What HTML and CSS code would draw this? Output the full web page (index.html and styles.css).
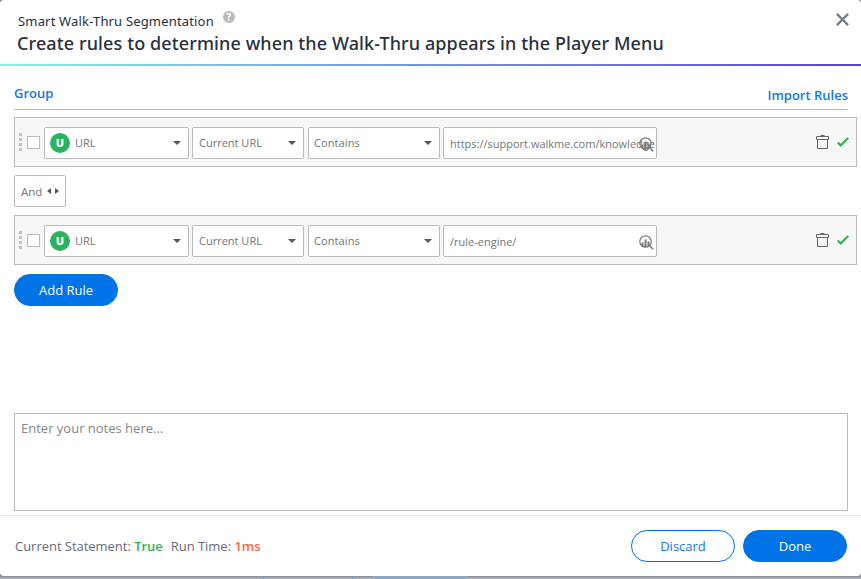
FILE: index.html
```html
<!DOCTYPE html>
<html lang="en">
<head>
    <meta charset="UTF-8">
    <meta name="viewport" content="width=device-width, initial-scale=1.0">
    <title>Smart Walk-Thru Segmentation</title>
    <link rel="stylesheet" href="styles.css">
</head>
<body>
    <svg class="sprite">
        <symbol id="icon-trash" viewBox="0 0 13 14">
            <path d="M4.5 .5h4M.5 1.5h12v3h-12zM1.500 4.500v9h10v-9" fill="none" stroke="#666" />
        </symbol>
        <symbol id="icon-check" viewBox="0 0 12 10">
            <path d="M.8 5.600l3 2.800L11.200 1" fill="none" stroke="#35b558" stroke-width="2.300" />
        </symbol>
        <symbol id="icon-inspect" viewBox="0 0 15 15">
            <circle cx="6.500" cy="6.500" r="5.700" fill="none" stroke="#777" stroke-width="1.200" />
            <path d="M2.500 7.500h2v4h-2zM5.500 4.500h2V12h-2zM8.500 6.500h2v4.500h-2z" fill="#777" />
            <path d="M10.500 10.500l3.700 3.700" stroke="#777" stroke-width="1.500" />
        </symbol>
    </svg>

    <div class="modal">
        <header class="header">
            <div class="subtitle">Smart Walk-Thru Segmentation <span class="help">?</span></div>
            <h1>Create rules to determine when the Walk-Thru appears in the Player Menu</h1>
            <svg class="close" viewBox="0 0 12 12"><path d="M.8 .8l10.400 10.400M11.200 .8L.8 11.200" stroke="#74808c" stroke-width="2.200" /></svg>
        </header>

        <main class="content">
            <div class="toolbar">
                <a class="group-link">Group</a>
                <a class="import-link">Import Rules</a>
            </div>

            <div class="rule">
                <div class="drag"><i></i><i></i><i></i><i></i></div>
                <div class="checkbox"></div>
                <div class="select type"><span class="badge">U</span>URL</div>
                <div class="select source">Current URL</div>
                <div class="select operator">Contains</div>
                <div class="value">
                    <span>https://support.walkme.com/knowledge</span>
                    <svg class="inspect"><use href="#icon-inspect" /></svg>
                </div>
                <svg class="trash"><use href="#icon-trash" /></svg>
                <svg class="check"><use href="#icon-check" /></svg>
            </div>

            <div class="logic">And <span class="arrows"></span></div>

            <div class="rule">
                <div class="drag"><i></i><i></i><i></i><i></i></div>
                <div class="checkbox"></div>
                <div class="select type"><span class="badge">U</span>URL</div>
                <div class="select source">Current URL</div>
                <div class="select operator">Contains</div>
                <div class="value">
                    <span>/rule-engine/</span>
                    <svg class="inspect"><use href="#icon-inspect" /></svg>
                </div>
                <svg class="trash"><use href="#icon-trash" /></svg>
                <svg class="check"><use href="#icon-check" /></svg>
            </div>

            <button class="btn primary add">Add Rule</button>
            <textarea class="notes" placeholder="Enter your notes here..."></textarea>
        </main>

        <footer class="footer">
            <div class="status">Current Statement: <b class="true">True</b></div>
            <div class="status">Run Time: <b class="time">1ms</b></div>
            <button class="btn outline">Discard</button>
            <button class="btn primary">Done</button>
        </footer>
    </div>

    <svg class="backdrop" viewBox="0 0 861 3">
        <path d="M260 0l4 3M356 0l-4 3" stroke="#7a9cc4" />
        <path d="M372 0h96l-4 3h-88z" fill="#8fa8c0" />
    </svg>
</body>
</html>
```

FILE: styles.css
```css
* {
    box-sizing: border-box;
}
body {
    margin: 0;
    height: 579px;
    overflow: hidden;
    background: linear-gradient(#868b92 576px, #b4b8c1 579px);
    font-family: "Open Sans", sans-serif;
}
.sprite {
    display: none;
}
.modal {
    display: flex;
    flex-direction: column;
    height: 576px;
    background: #fff;
    border-radius: 4px;
}
.header {
    position: relative;
    height: 66px;
    padding: 11px 17px 0;
    border-bottom: 2px solid;
    border-image: linear-gradient(to right, #7df5e9, #70aee8 35%, #6870e0 75%, #5b3fd6) 1;
    color: #27303f;
    font-family: "Noto Sans", sans-serif;
}
.subtitle {
    display: flex;
    height: 20px;
    padding-left: 1px;
    font-size: 13px;
    line-height: 20px;
    letter-spacing: 0.17px;
}
.help {
    width: 12px;
    height: 12px;
    margin-left: 9px;
    border-radius: 50%;
    background: #bbb;
    color: #fff;
    font-size: 10px;
    font-weight: bold;
    line-height: 12px;
    text-align: center;
}
h1 {
    margin: 0;
    font-size: 18px;
    line-height: 25px;
    font-weight: 500;
    letter-spacing: 0.11px;
}
.close {
    position: absolute;
    top: 13px;
    right: 12px;
    width: 13px;
    height: 13px;
}
.content {
    display: flex;
    flex-direction: column;
    align-items: flex-start;
    height: 449px;
    padding: 0 4px 0 14px;
}
.toolbar {
    display: flex;
    justify-content: space-between;
    width: 834px;
    height: 44px;
    margin-bottom: 7px;
    border-bottom: 1px solid #bbb;
    color: #1477e3;
    font-size: 13px;
    line-height: 20px;
    font-weight: 600;
}
.group-link {
    padding-top: 17px;
}
.import-link {
    padding-top: 19px;
}
.rule {
    display: flex;
    align-items: center;
    width: 843px;
    height: 50px;
    padding: 0 7px 0 4px;
    border: 1px solid #bbb;
    background: #f7f7f7;
    color: #757575;
    font-size: 11px;
}
.drag {
    display: grid;
    gap: 2px;
    margin-right: 5px;
}
.drag i {
    width: 3px;
    height: 3px;
    background: #c4c4c4;
}
.checkbox {
    width: 13px;
    height: 13px;
    margin-right: 4px;
    border: 1px solid #bbb;
    background: #fff;
}
.select, .value, .logic {
    display: flex;
    align-items: center;
    height: 32px;
    border: 1px solid #bbb;
    border-radius: 2px;
    background: #fff;
}
.select, .value {
    margin-top: 1px;
}
.select {
    padding: 0 7px 0 6px;
}
.select::after {
    content: "";
    margin-left: auto;
    border: 4px solid transparent;
    border-top-color: #4f5960;
    border-bottom: 0;
}
.type {
    width: 145px;
    margin-right: 3px;
    padding-left: 5px;
}
.source {
    width: 112px;
    margin-right: 4px;
}
.operator {
    width: 132px;
    margin-right: 3px;
    padding-left: 5px;
    letter-spacing: 0.1px;
}
.badge {
    width: 20px;
    height: 20px;
    margin-right: 5px;
    border-radius: 50%;
    background: #2bb25e;
    color: #fff;
    font-size: 11px;
    font-weight: 800;
    line-height: 20px;
    text-align: center;
}
.value {
    position: relative;
    width: 214px;
    padding: 2px 0 0 6px;
}
.value span {
    white-space: nowrap;
}
.inspect {
    position: absolute;
    top: 9px;
    right: 2px;
    width: 15px;
    height: 15px;
}
.trash {
    width: 13px;
    height: 14px;
    margin-left: auto;
}
.check {
    width: 12px;
    height: 10px;
    margin-left: 8px;
}
.logic {
    width: 52px;
    margin: 8px 0;
    padding-left: 6px;
    color: #757575;
    font-size: 11.5px;
}
.arrows {
    display: flex;
    gap: 4px;
    margin-left: 5px;
}
.arrows::before, .arrows::after {
    content: "";
    border: 3px solid transparent;
}
.arrows::before {
    border-right: 4px solid #555;
    border-left: 0;
}
.arrows::after {
    border-left: 4px solid #555;
    border-right: 0;
}
.btn {
    width: 104px;
    height: 32px;
    padding: 0;
    border: 1px solid #0073e6;
    border-radius: 16px;
    font-family: inherit;
    font-size: 13px;
    font-weight: 500;
}
.primary {
    background: #0073e6;
    color: #fff;
}
.outline {
    margin-left: auto;
    margin-right: 8px;
    background: #fff;
    color: #1477e3;
}
.add {
    margin-top: 9px;
}
.notes {
    width: 834px;
    height: 98px;
    margin-top: 107px;
    padding: 5px 6px;
    border: 1px solid #bbb;
    resize: none;
    font-family: inherit;
    font-size: 13px;
}
.notes::placeholder {
    color: #858585;
}
.footer {
    display: flex;
    align-items: center;
    height: 61px;
    padding: 0 14px 0 15px;
    border-top: 1px solid #e6e7ee;
    color: #686b7c;
    font-size: 13px;
    letter-spacing: -0.03px;
}
.status {
    margin-right: 8px;
}
.status b {
    font-weight: 600;
}
.status .true {
    color: #2bb25e;
}
.status .time {
    color: #ff6549;
}
.backdrop {
    display: block;
    width: 861px;
    height: 3px;
}
```
